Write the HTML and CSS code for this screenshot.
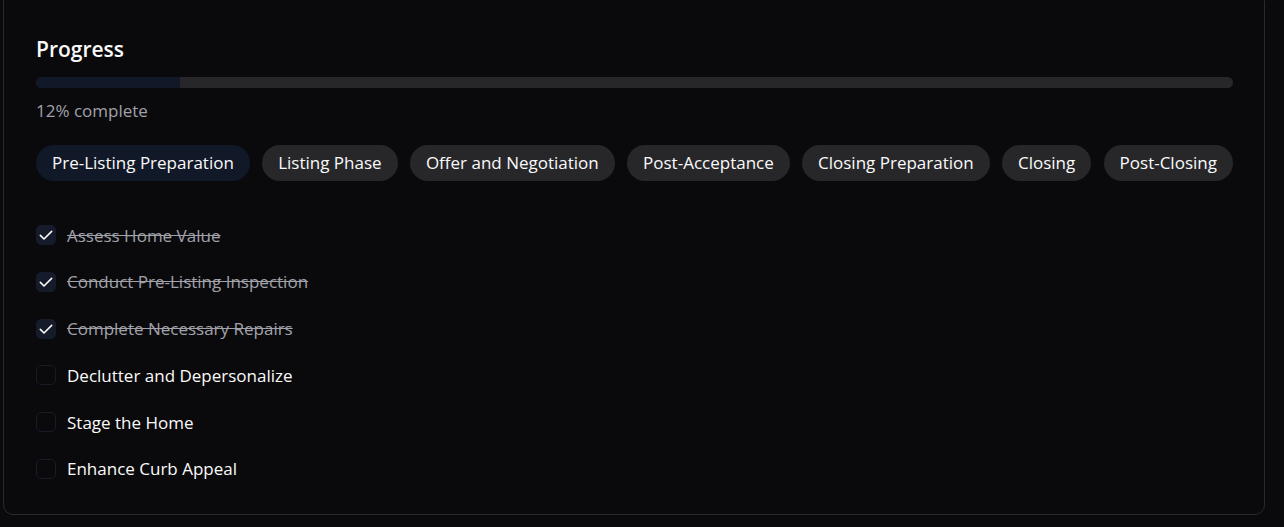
FILE: index.html
```html
<!DOCTYPE html>
<html lang="en">
<head>
<meta charset="utf-8">
<title>Progress</title>
<link rel="stylesheet" href="styles.css">
</head>
<body>
<div class="card">
  <h2 class="title">Progress</h2>
  <div class="bar"><div class="bar-fill" style="width:12%"></div></div>
  <p class="pct">12% complete</p>
  <div class="tabs">
    <button class="tab active">Pre-Listing Preparation</button>
    <button class="tab">Listing Phase</button>
    <button class="tab">Offer and Negotiation</button>
    <button class="tab">Post-Acceptance</button>
    <button class="tab">Closing Preparation</button>
    <button class="tab">Closing</button>
    <button class="tab">Post-Closing</button>
  </div>
  <ul class="list">
    <li class="item done"><span class="box"><svg viewBox="0 0 24 24" width="16" height="16"><path d="M3.5 12.5l5.5 5.5L20.5 6.5" fill="none" stroke="#fff" stroke-width="2.3" stroke-linecap="round" stroke-linejoin="round"/></svg></span><span class="label">Assess Home Value</span></li>
    <li class="item done"><span class="box"><svg viewBox="0 0 24 24" width="16" height="16"><path d="M3.5 12.5l5.5 5.5L20.5 6.5" fill="none" stroke="#fff" stroke-width="2.3" stroke-linecap="round" stroke-linejoin="round"/></svg></span><span class="label">Conduct Pre-Listing Inspection</span></li>
    <li class="item done"><span class="box"><svg viewBox="0 0 24 24" width="16" height="16"><path d="M3.5 12.5l5.5 5.5L20.5 6.5" fill="none" stroke="#fff" stroke-width="2.3" stroke-linecap="round" stroke-linejoin="round"/></svg></span><span class="label">Complete Necessary Repairs</span></li>
    <li class="item"><span class="box"></span><span class="label">Declutter and Depersonalize</span></li>
    <li class="item"><span class="box"></span><span class="label">Stage the Home</span></li>
    <li class="item"><span class="box"></span><span class="label">Enhance Curb Appeal</span></li>
  </ul>
</div>
</body>
</html>
```

FILE: styles.css
```css
html, body {
  margin: 0;
  padding: 0;
  background: #0a0a0c;
  color: #fafafa;
  font-family: "Open Sans", "Noto Sans", sans-serif;
}
.card {
  margin: -8px 19px 0 3px;
  border: 1px solid #2a2a2e;
  border-radius: 10px;
  background: #0a0a0c;
  padding: 42px 31px 33px 32px;
}
.title {
  margin: 0;
  font-size: 21px;
  line-height: 28px;
  font-weight: 600;
}
.bar {
  margin-top: 14px;
  height: 11px;
  border-radius: 6px;
  background: #27272a;
  overflow: hidden;
}
.bar-fill {
  height: 100%;
  background: #111827;
}
.pct {
  margin: 11px 0 0;
  font-size: 17px;
  line-height: 24px;
  color: #a1a1aa;
}
.tabs {
  margin-top: 22px;
  display: flex;
  justify-content: space-between;
}
.tab {
  border: none;
  border-radius: 999px;
  background: #27272a;
  color: #fafafa;
  font-family: inherit;
  font-size: 17px;
  line-height: 24px;
  padding: 6px 16px;
}
.tab.active {
  background: #111827;
}
.list {
  list-style: none;
  margin: 42px 0 0;
  padding: 0;
  display: flex;
  flex-direction: column;
  gap: 22.8px;
}
.item {
  display: flex;
  align-items: center;
  gap: 11px;
  height: 24px;
  font-size: 17px;
}
.box {
  width: 20px;
  height: 20px;
  box-sizing: border-box;
  border: 1px solid #161c2a;
  border-radius: 5px;
  display: flex;
  align-items: center;
  justify-content: center;
}
.done .box {
  background: #151b2b;
  border-color: #151b2b;
}
.done .label {
  color: #a1a1aa;
  text-decoration: line-through;
}
```
